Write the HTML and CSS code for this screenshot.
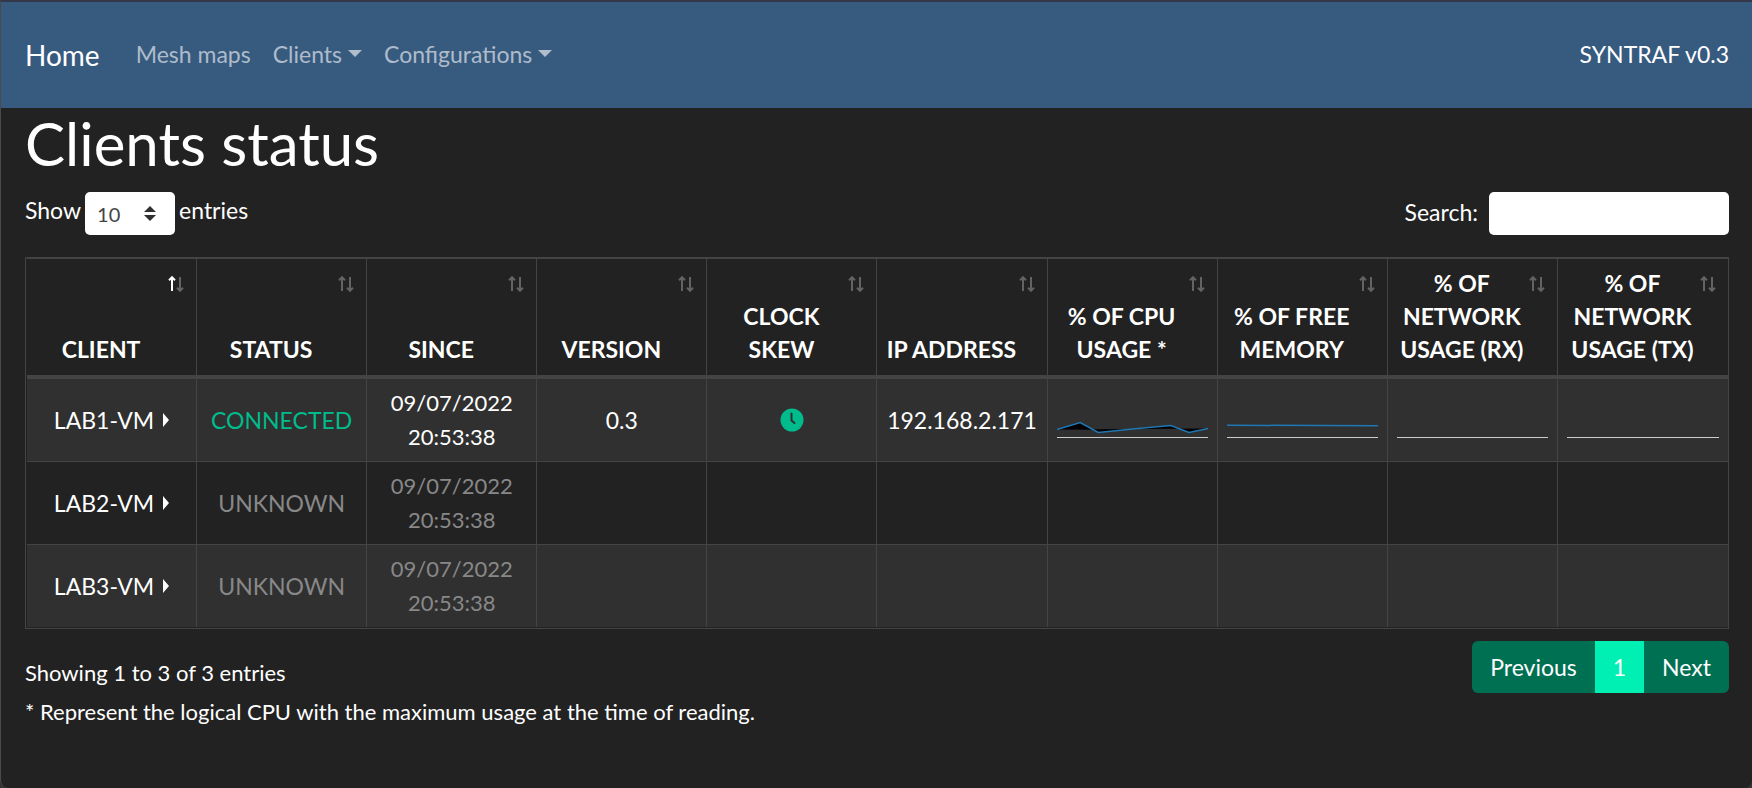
FILE: index.html
```html
<!DOCTYPE html>
<html lang="en">
<head>
<meta charset="utf-8">
<title>SYNTRAF - Clients status</title>
<link rel="stylesheet" href="styles.css">
</head>
<body>
<svg class="defs" aria-hidden="true">
  <symbol id="sort" viewBox="0 0 16 16">
    <path class="up" d="M4 15V2M1 4.200L4 1.200L7 4.200"/>
    <path class="down" d="M12 1V14M9 11.800L12 14.800L15 11.800"/>
  </symbol>
</svg>
<div class="window">
  <nav class="navbar">
    <a class="brand" href="#">Home</a>
    <div class="links">
      <a class="nav-link" href="#">Mesh maps</a>
      <a class="nav-link drop" href="#">Clients</a>
      <a class="nav-link drop" href="#">Configurations</a>
    </div>
    <span class="version">SYNTRAF v0.3</span>
  </nav>
  <main class="content">
    <h1>Clients status</h1>
    <div class="controls">
      <div class="length">
        <label for="length">Show</label>
        <select id="length"><option>10</option><option>25</option><option>50</option></select>
        <span>entries</span>
      </div>
      <div class="filter">
        <label for="search">Search:</label>
        <input id="search" type="search">
      </div>
    </div>
    <table class="clients">
      <thead>
        <tr>
          <th class="asc">CLIENT<svg class="sort"><use href="#sort"/></svg></th>
          <th>STATUS<svg class="sort"><use href="#sort"/></svg></th>
          <th>SINCE<svg class="sort"><use href="#sort"/></svg></th>
          <th>VERSION<svg class="sort"><use href="#sort"/></svg></th>
          <th>CLOCK SKEW<svg class="sort"><use href="#sort"/></svg></th>
          <th>IP ADDRESS<svg class="sort"><use href="#sort"/></svg></th>
          <th>% OF CPU USAGE *<svg class="sort"><use href="#sort"/></svg></th>
          <th>% OF FREE MEMORY<svg class="sort"><use href="#sort"/></svg></th>
          <th>% OF NETWORK USAGE (RX)<svg class="sort"><use href="#sort"/></svg></th>
          <th>% OF NETWORK USAGE (TX)<svg class="sort"><use href="#sort"/></svg></th>
        </tr>
      </thead>
      <tbody>
        <tr>
          <td><button class="client" type="button">LAB1-VM</button></td>
          <td class="ok">CONNECTED</td>
          <td class="since">09/07/2022 20:53:38</td>
          <td>0.3</td>
          <td><svg class="clock" viewBox="0 0 24 24" role="img" aria-label="In sync"><circle cx="12" cy="12" r="11.500"/><path d="M11.500 5.500V12.500L14.500 15"/></svg></td>
          <td>192.168.2.171</td>
          <td><svg class="spark" viewBox="0 0 150 20" preserveAspectRatio="none"><path class="area" d="M0 11.500L23 4.500L41 14.500L75 11L113 7.500L131 14.500L150 10.500Z"/><path class="line" d="M0 11.500L23 4.500L41 14.500L75 11L113 7.500L131 14.500L150 10.500"/><path class="base" d="M0 19.500H150"/></svg></td>
          <td><svg class="spark" viewBox="0 0 150 20" preserveAspectRatio="none"><path class="line" d="M0 7.200L150 7.800"/><path class="base" d="M0 19.500H150"/></svg></td>
          <td><svg class="spark" viewBox="0 0 150 20" preserveAspectRatio="none"><path class="base" d="M0 19.500H150"/></svg></td>
          <td><svg class="spark" viewBox="0 0 150 20" preserveAspectRatio="none"><path class="base" d="M0 19.500H150"/></svg></td>
        </tr>
        <tr>
          <td><button class="client" type="button">LAB2-VM</button></td>
          <td class="muted">UNKNOWN</td>
          <td class="since muted">09/07/2022 20:53:38</td>
          <td></td><td></td><td></td><td></td><td></td><td></td><td></td>
        </tr>
        <tr>
          <td><button class="client" type="button">LAB3-VM</button></td>
          <td class="muted">UNKNOWN</td>
          <td class="since muted">09/07/2022 20:53:38</td>
          <td></td><td></td><td></td><td></td><td></td><td></td><td></td>
        </tr>
      </tbody>
    </table>
    <div class="table-foot">
      <p class="info">Showing 1 to 3 of 3 entries</p>
      <div class="pagination">
        <a href="#">Previous</a><a class="active" href="#">1</a><a href="#">Next</a>
      </div>
    </div>
    <p>* Represent the logical CPU with the maximum usage at the time of reading.</p>
  </main>
</div>
</body>
</html>
```
FILE: styles.css
```css
* { box-sizing: border-box; }
html { background: #33343a; }
body {
  margin: 0;
  font-family: Lato, "Liberation Sans", sans-serif;
  font-size: 23px;
  line-height: 34px;
  color: #fff;
}
.defs { display: none; }
.window {
  min-height: 100vh;
  border-top: 2px solid #34374a;
  border-left: 1px solid #4a4a4a;
  border-radius: 0 0 8px 8px;
  background: #222;
}
a { color: inherit; text-decoration: none; }
p { margin: 0; font-size: 22px; }

.navbar {
  display: flex;
  align-items: center;
  padding: 35px 23px 35px 24px;
  background: #375a7f;
}
.brand { font-size: 28px; line-height: 36px; margin-right: 25px; }
.links { display: flex; flex: 1; }
.nav-link {
  padding: 0 11px;
  color: rgba(255, 255, 255, 0.6);
}
.links, .version { padding-bottom: 2px; }
.drop::after {
  content: "";
  display: inline-block;
  margin-left: 6px;
  vertical-align: 6px;
  border: 7px solid transparent;
  border-top-color: currentColor;
  border-bottom: 0;
}

.content { padding: 0 23px 0 24px; }
h1 {
  margin: 0 0 14px;
  font-size: 60px;
  font-weight: 400;
  line-height: 70px;
}
.controls {
  display: flex;
  justify-content: space-between;
  margin-bottom: 22px;
}
.length, .filter { display: flex; align-items: flex-start; }
.length { gap: 4px; line-height: 36px; }
.filter { gap: 11px; line-height: 40px; }
select, input {
  height: 43px;
  border: 0;
  border-radius: 5px;
  background: #fff;
  color: #444;
  font: 20px Lato, "Liberation Sans", sans-serif;
}
select {
  width: 90px;
  padding: 0 12px;
  appearance: none;
  background: #fff url("data:image/svg+xml,%3Csvg xmlns='http://www.w3.org/2000/svg' viewBox='0 0 4 5'%3E%3Cpath fill='%23303030' d='M2 0L0 2h4zm0 5L0 3h4z'/%3E%3C/svg%3E") no-repeat right 19px center / 12px 15px;
}
input { width: 240px; padding: 0 12px; }

.clients {
  width: 100%;
  table-layout: fixed;
  border-collapse: separate;
  border-spacing: 0;
  border: 1px solid #444;
  padding: 0 0 1px 1px;
  text-align: center;
}
.clients th, .clients td {
  padding: 7px 9px;
  border-right: 1px solid #444;
}
.clients th:last-child, .clients td:last-child { border-right: 0; }
.clients th {
  position: relative;
  padding: 8px 29px 9px 8px;
  border-top: 1px solid #444;
  border-bottom: 4px solid #444;
  vertical-align: bottom;
  font-weight: 700;
  line-height: 33px;
}
.sort {
  position: absolute;
  top: 17px;
  right: 12px;
  width: 16px;
  height: 16px;
  --up: #636363;
}
.asc .sort { --up: #fff; }
.up, .down { fill: none; stroke: #636363; stroke-width: 2; }
.up { stroke: var(--up); }
.clients td { vertical-align: middle; border-bottom: 1px solid #444; }
.clients tbody tr:last-child td { border-bottom: 0; }
.clients tbody tr:nth-child(odd) { background: #303030; }
.clients .since { font-size: 22px; }
.clients .ok { color: #00bc8c; }
.clients .muted { color: #888; }
.client {
  display: inline-flex;
  align-items: center;
  gap: 9px;
  padding: 0;
  border: 0;
  background: none;
  color: #fff;
  font: inherit;
}
.client::after {
  content: "";
  border: 7px solid transparent;
  border-left: 6px solid #fff;
  border-right: 0;
}
.clock { display: block; width: 24px; height: 24px; margin: 0 auto; fill: #00bc8c; }
.clock path { fill: none; stroke: #303030; stroke-width: 2; stroke-linecap: round; stroke-linejoin: round; }
.spark { display: block; width: 100%; height: 20px; margin-top: 16px; }
.area { fill: #000; }
.line { fill: none; stroke: #1f77b4; stroke-width: 1.500; }
.base { stroke: #ccc; stroke-width: 1; }

.table-foot {
  display: flex;
  justify-content: space-between;
  padding: 12px 0 2px;
}
.info { padding-top: 15px; line-height: 34px; }
.pagination {
  display: flex;
  border-radius: 6px;
  overflow: hidden;
  line-height: 52px;
  background: #007053;
}
.pagination a { padding: 0 18px; }
.pagination .active { background: #00efb2; }
```
